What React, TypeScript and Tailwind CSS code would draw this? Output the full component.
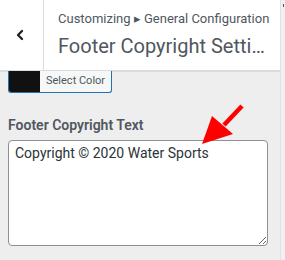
import { ChevronLeft } from 'lucide-react';

export default function App() {
  return (
    <div className="flex w-[285px] h-[260px] overflow-hidden bg-[#eeeeee] font-['Roboto',sans-serif]">
      <div className="w-[280px] flex flex-col">
        {/* header */}
        <div className="h-[72px] shrink-0 bg-white border-b-2 border-[#dcdcde] flex">
          <button className="w-[44px] border-r border-[#dcdcde] flex items-center justify-center text-[#1d2327]">
            <ChevronLeft className="w-[16px] h-[16px] -ml-[4px] mt-[-1px]" strokeWidth={3.5} />
          </button>
          <div className="flex-1 min-w-0 pl-[14px] pr-[12px] pt-[10px]">
            <div className="text-[13px] leading-[18px] text-[#50575e] whitespace-nowrap">
              Customizing ▸ General Configuration
            </div>
            <div className="mt-[5px] text-[20px] leading-[26px] text-[#50575e] whitespace-nowrap overflow-hidden text-ellipsis">
              Footer Copyright Settings
            </div>
          </div>
        </div>

        {/* content */}
        <div className="relative px-[8px]">
          <button className="flex h-[22px] w-[104px] -mt-[1px] bg-[#f6f7f7] border border-t-0 border-[#2271b1] rounded-b-[3px] overflow-hidden">
            <span className="w-[31px] h-full bg-[#111111]" />
            <span className="flex-1 text-[11px] leading-[20px] text-[#50575e] text-left pl-[6px]">Select Color</span>
          </button>

          <div className="mt-[22px] text-[14px] leading-[20px] font-semibold text-[#50575e]">
            Footer Copyright Text
          </div>
          <textarea
            className="mt-[5px] block w-[260px] h-[106px] bg-white border border-[#8c8f94] rounded-[4px] px-[6px] pt-[2px] text-[14px] leading-[20px] text-[#2c3338] outline-none"
            defaultValue="Copyright © 2020 Water Sports"
          />

          <svg className="absolute left-[198px] top-[31px]" width="48" height="46" viewBox="0 0 48 46">
            <line x1="44" y1="3" x2="26" y2="22" stroke="#ff0000" strokeWidth="4.5" />
            <polygon points="4,41 14,13 35,31" fill="#ff0000" />
          </svg>
        </div>
      </div>
      <div className="w-[5px] bg-[#f0f0f1] border-l border-[#e2e2e2] pt-[4px]">
        <div className="ml-[2px] w-[1px] h-[3px] bg-[#555]" />
      </div>
    </div>
  );
}
